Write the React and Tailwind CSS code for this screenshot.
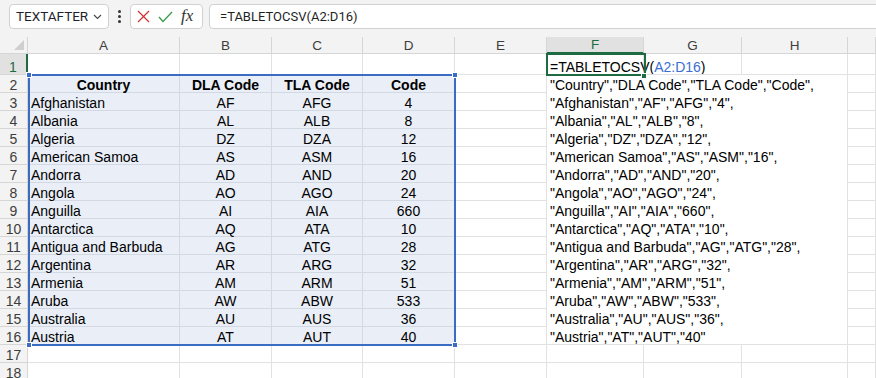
import React from 'react';

const rows = [
  ['Afghanistan', 'AF', 'AFG', '4'],
  ['Albania', 'AL', 'ALB', '8'],
  ['Algeria', 'DZ', 'DZA', '12'],
  ['American Samoa', 'AS', 'ASM', '16'],
  ['Andorra', 'AD', 'AND', '20'],
  ['Angola', 'AO', 'AGO', '24'],
  ['Anguilla', 'AI', 'AIA', '660'],
  ['Antarctica', 'AQ', 'ATA', '10'],
  ['Antigua and Barbuda', 'AG', 'ATG', '28'],
  ['Argentina', 'AR', 'ARG', '32'],
  ['Armenia', 'AM', 'ARM', '51'],
  ['Aruba', 'AW', 'ABW', '533'],
  ['Australia', 'AU', 'AUS', '36'],
  ['Austria', 'AT', 'AUT', '40'],
];

const header = ['Country', 'DLA Code', 'TLA Code', 'Code'];
const letters = ['A', 'B', 'C', 'D', 'E', 'F', 'G', 'H', ''];

const csvLines = [header, ...rows].map((r, i, all) => {
  const line = r.map((v) => `"${v}"`).join(',');
  return i === all.length - 1 ? line : line + ',';
});

const RowHead = ({ n, active }) => (
  <div
    className={
      active
        ? 'flex items-end justify-center bg-[#e1e1e1] text-[#1e6b41] border-b border-b-[#d6d6d6] border-r-2 border-r-[#1e6b41] text-[14px] leading-[13px]'
        : 'flex items-end justify-center bg-[#f3f3f3] text-[#3d3d3d] border-b border-r border-[#d6d6d6] text-[14px] leading-[13px]'
    }
  >
    {n}
  </div>
);

const Cell = ({ children, range, center, bold }) => (
  <div
    className={[
      'flex items-end px-[3px] text-[14px] leading-[14px] whitespace-nowrap border-r border-b',
      range ? 'bg-[#e9eef7] border-[#d3d9e2]' : 'border-[#e1e1e1]',
      center ? 'justify-center' : '',
      bold ? 'font-bold' : '',
    ].join(' ')}
  >
    {children}
  </div>
);

export default function App() {
  return (
    <div className="w-[876px] h-[378px] overflow-hidden bg-white font-['Liberation_Sans',Arial,sans-serif] text-black">
      {/* formula bar */}
      <div className="h-[37px] bg-[#f3f3f3] flex items-start pt-[4px] pl-[9px] overflow-hidden">
        <div className="w-[100px] h-[25px] shrink-0 bg-white border border-[#d1d1d1] rounded-[4px] flex items-center justify-between pl-[6px] pr-[6px] font-['Roboto',sans-serif] text-[13.5px] text-[#1f1f2e]">
          <span>TEXTAFTER</span>
          <svg width="9" height="6" viewBox="0 0 9 6" fill="none" stroke="#444" strokeWidth="1.1">
            <polyline points="1,1 4.5,4.5 8,1" />
          </svg>
        </div>
        <div className="w-[21px] h-[25px] shrink-0 flex flex-col items-center justify-center gap-[2.5px]">
          <span className="w-[2.5px] h-[2.5px] rounded-full bg-[#333]" />
          <span className="w-[2.5px] h-[2.5px] rounded-full bg-[#333]" />
          <span className="w-[2.5px] h-[2.5px] rounded-full bg-[#333]" />
        </div>
        <div className="w-[73px] h-[25px] shrink-0 bg-white border border-[#d1d1d1] rounded-[4px] flex items-center pl-[6px] gap-[8px]">
          <svg width="13" height="13" viewBox="0 0 13 13" fill="none" stroke="#d13438" strokeWidth="1.3">
            <line x1="1" y1="1" x2="12" y2="12" />
            <line x1="12" y1="1" x2="1" y2="12" />
          </svg>
          <svg width="15" height="12" viewBox="0 0 15 12" fill="none" stroke="#3a9b4b" strokeWidth="1.3">
            <polyline points="1,6 5,10.5 14,1" />
          </svg>
          <span className="font-['Liberation_Serif',serif] italic text-[17px] leading-none text-[#333] -mt-[2px]">fx</span>
        </div>
        <div className="w-[700px] h-[25px] shrink-0 ml-[6px] bg-white border border-[#d1d1d1] rounded-[4px] flex items-center pl-[10px] font-['Roboto',sans-serif] text-[13px] text-[#1f1f1f]">
          =TABLETOCSV(A2:D16)
        </div>
      </div>

      {/* sheet */}
      <div className="relative">
        <div className="grid grid-cols-[28px_152px_92px_91px_92px_92px_97px_98px_106px_1fr] grid-rows-[17px_21px_repeat(17,18px)]">
          {/* column headings */}
          <div className="relative bg-[#f3f3f3] border-r border-b border-[#d6d6d6]">
            <svg className="absolute right-[3px] bottom-[3px]" width="10" height="10" viewBox="0 0 10 10">
              <polygon points="10,0 10,10 0,10" fill="#cfcfcf" />
            </svg>
          </div>
          {letters.map((l, i) =>
            l === 'F' ? (
              <div key={i} className="flex items-center justify-center bg-[#e1e1e1] text-[#1e6b41] border-r border-[#d6d6d6] border-b-2 border-b-[#1e6b41] text-[13.5px] pt-[2px]">
                {l}
              </div>
            ) : (
              <div key={i} className="flex items-center justify-center bg-[#f3f3f3] text-[#3d3d3d] border-r border-b border-[#d6d6d6] text-[13.5px] pt-[2px]">
                {l}
              </div>
            )
          )}

          {/* row 1 */}
          <RowHead n={1} active />
          {letters.map((l, i) =>
            l === 'F' ? (
              <div key={i} className="flex items-end px-[3px] text-[14px] leading-[14px] whitespace-nowrap border-r border-b border-[#e1e1e1]">
                <span>
                  =TABLETOCSV(<span className="text-[#3b6fd0]">A2:D16</span>)
                </span>
              </div>
            ) : (
              <div key={i} className="border-r border-b border-[#e1e1e1]" />
            )
          )}

          {/* header row */}
          <RowHead n={2} />
          {header.map((h) => (
            <Cell key={h} range center bold>
              {h}
            </Cell>
          ))}
          <Cell />
          <div className="col-start-7 col-span-3 row-start-3 row-span-15 bg-white border-r border-b border-[#e1e1e1] pl-[3px] text-[14px] whitespace-nowrap">
            {csvLines.map((line) => (
              <div key={line} className="h-[18px] flex items-end leading-[14px] pb-[1px]">
                {line}
              </div>
            ))}
          </div>
          <Cell />

          {rows.map((r, i) => (
            <React.Fragment key={r[0]}>
              <RowHead n={i + 3} />
              <Cell range>{r[0]}</Cell>
              <Cell range center>{r[1]}</Cell>
              <Cell range center>{r[2]}</Cell>
              <Cell range center>{r[3]}</Cell>
              <Cell />
              <Cell />
            </React.Fragment>
          ))}

          {[17, 18].map((n) => (
            <React.Fragment key={n}>
              <RowHead n={n} />
              {letters.map((l, i) => (
                <Cell key={i} />
              ))}
            </React.Fragment>
          ))}
        </div>

        {/* selected range A2:D16 */}
        <div className="absolute left-[28px] top-[37px] w-[428px] h-[272px] border-2 border-[#3a6cc4] pointer-events-none" />
        <div className="absolute left-[26px] top-[35px] w-[6px] h-[6px] bg-[#3a6cc4] border border-white" />
        <div className="absolute left-[452px] top-[35px] w-[6px] h-[6px] bg-[#3a6cc4] border border-white" />
        <div className="absolute left-[26px] top-[305px] w-[6px] h-[6px] bg-[#3a6cc4] border border-white" />
        <div className="absolute left-[452px] top-[305px] w-[6px] h-[6px] bg-[#3a6cc4] border border-white" />

        {/* active cell F1 */}
        <div className="absolute left-[546px] top-[16px] w-[100px] h-[23px] border-2 border-[#1e6b41] pointer-events-none" />
        <div className="absolute left-[641px] top-[36px] w-[6px] h-[6px] bg-[#1e6b41] border border-white" />
      </div>
    </div>
  );
}
